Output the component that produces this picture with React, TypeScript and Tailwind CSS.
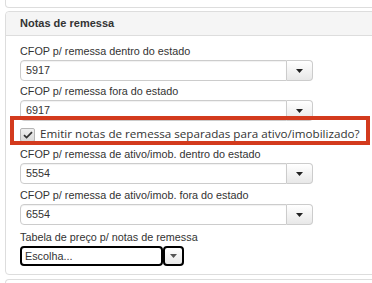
const font = { fontFamily: '"Liberation Sans", Arial, sans-serif' };

const Caret = ({ color = "#222" }: { color?: string }) => (
  <svg width="7" height="4" viewBox="0 0 7 4">
    <path d="M0 0h7L3.5 4z" fill={color} />
  </svg>
);

type SelectProps = {
  label: string;
  value: string;
  className?: string;
};

const SelectField = ({ label, value, className = "" }: SelectProps) => (
  <div className={className}>
    <label className="block h-[14px] mb-[2px] text-[10.8px] leading-[14px] text-[#333]">
      {label}
    </label>
    <div className="flex w-[293px] h-[21px]">
      <div className="flex-1 flex items-center pl-[5px] border border-[#ccc] rounded-l-[4px] shadow-[inset_0_1px_1px_rgba(0,0,0,0.06)] text-[10.8px] text-[#333] bg-white">
        {value}
      </div>
      <button className="w-[26px] flex items-center justify-center border border-l-0 border-[#ccc] rounded-r-[4px] bg-gradient-to-b from-white to-[#e8e8e8]">
        <Caret />
      </button>
    </div>
  </div>
);

const App = () => {
  return (
    <div className="w-[372px] h-[283px] overflow-hidden bg-white pl-[5px]" style={font}>
      <div className="w-[420px] h-[8px] border-x border-b border-[#ddd] rounded-b-[4px]" />

      <div className="mt-[3px] w-[420px] border border-[#ddd] rounded-[4px]">
        <div className="h-[24px] flex items-center pl-[14px] bg-[#f5f5f5] border-b border-[#ddd] rounded-t-[4px]">
          <h2 className="text-[11px] font-bold text-[#333]">Notas de remessa</h2>
        </div>

        <div className="pl-[14px] pt-[8px] pb-[8px]">
          <SelectField label="CFOP p/ remessa dentro do estado" value="5917" />
          <SelectField
            className="mt-[3px]"
            label="CFOP p/ remessa fora do estado"
            value="6917"
          />

          <div className="relative h-[26px] flex items-center gap-[5px]">
            <span className="w-[15px] h-[14px] mt-[1px] flex items-center justify-center border border-[#b5b5b5] rounded-[2px] bg-gradient-to-b from-[#f0f0f0] to-[#d9d9d9]">
              <svg width="10" height="8" viewBox="0 0 10 8">
                <path
                  d="M1 4.2 3.6 6.6 9 1.2"
                  fill="none"
                  stroke="#333"
                  strokeWidth="1.8"
                />
              </svg>
            </span>
            <span
              className="text-[11.65px] text-[#333]"
              style={{ fontFamily: '"Open Sans", "Noto Sans", sans-serif' }}
            >
              Emitir notas de remessa separadas para ativo/imobilizado?
            </span>
            <div className="absolute -left-[10px] -top-[5px] w-[360px] h-[29px] border-[4px] border-[#d33a1d] pointer-events-none" />
          </div>

          <SelectField
            label="CFOP p/ remessa de ativo/imob. dentro do estado"
            value="5554"
          />
          <SelectField
            className="mt-[4px]"
            label="CFOP p/ remessa de ativo/imob. fora do estado"
            value="6554"
          />

          <div className="mt-[5px]">
            <label className="block h-[14px] mb-[2px] text-[10.8px] leading-[14px] text-[#333]">
              Tabela de preço p/ notas de remessa
            </label>
            <div className="flex h-[20px]">
              <div className="w-[143px] flex items-center pl-[3px] border-2 border-black rounded-[4px] text-[10.8px] text-[#333] bg-white">
                Escolha...
              </div>
              <button className="w-[21px] flex items-center justify-center border-2 border-black rounded-[4px] bg-gradient-to-b from-white to-[#e8e8e8]">
                <Caret color="#555" />
              </button>
            </div>
          </div>
        </div>
      </div>

      <div className="mt-[4px] w-[420px] h-[10px] border-x border-t border-[#ddd] rounded-t-[4px]" />
    </div>
  );
};

export default App;
